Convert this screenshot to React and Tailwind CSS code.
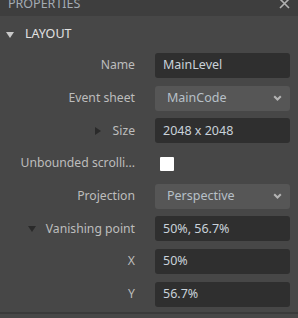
import React from 'react';

const font = { fontFamily: '"Segoe UI", "Noto Sans", "Open Sans", sans-serif' };

const Chevron = () => (
  <svg width="9" height="6" viewBox="0 0 9 6" className="shrink-0">
    <path d="M1.2 1.2 L4.5 4.5 L7.8 1.2" fill="none" stroke="#b4b4b4" strokeWidth="2" />
  </svg>
);

const TriRight = () => (
  <span className="mr-[12px] inline-block h-0 w-0 border-y-[4px] border-l-[6px] border-y-transparent border-l-[#2a2a2a]" />
);

const TriDown = () => (
  <span className="mr-[10px] inline-block h-0 w-0 border-x-[4px] border-t-[6px] border-x-transparent border-t-[#2a2a2a]" />
);

const Label = ({ children, icon }) => (
  <div className="flex w-[135px] shrink-0 items-center justify-end whitespace-nowrap text-[12.2px] text-[#bdbdbd]">
    {icon}
    {children}
  </div>
);

const Input = ({ value }) => (
  <div className="flex h-full w-[135px] items-center rounded-[3px] bg-[#2f2f2f] pl-[8px] text-[12.5px] text-[#c9d2da]">
    {value}
  </div>
);

const Select = ({ value }) => (
  <div className="flex h-full w-[135px] items-center justify-between rounded-[3px] bg-[#565656] pl-[12px] pr-[8px] text-[12.5px] text-[#b7c0c8]">
    <span>{value}</span>
    <Chevron />
  </div>
);

const Row = ({ label, icon, children }) => (
  <div className="flex h-[25px] items-center gap-[20px]">
    <Label icon={icon}>{label}</Label>
    {children}
  </div>
);

export default function App() {
  return (
    <div className="h-[318px] w-[298px] overflow-hidden bg-[#474747]" style={font}>
      <div className="flex h-[16px] items-start justify-between overflow-hidden bg-[#3e3e3e] pl-[8px] pr-[8px]">
        <span className="-mt-[4px] text-[12.5px] leading-[16px] text-[#a4acb4]">PROPERTIES</span>
        <svg width="11" height="11" viewBox="0 0 11 11" className="-mt-[2px]">
          <path d="M1 1 L10 10 M10 1 L1 10" stroke="#b0b0b0" strokeWidth="1.6" />
        </svg>
      </div>
      <div className="flex h-[37px] items-center pl-[6px]">
        <span className="mr-[11px] inline-block h-0 w-0 border-x-[4px] border-t-[6px] border-x-transparent border-t-[#c8c8c8]" />
        <span className="text-[12.5px] text-[#e2e2e2]">LAYOUT</span>
      </div>
      <div className="flex flex-col gap-[7.7px]">
        <Row label="Name">
          <Input value="MainLevel" />
        </Row>
        <Row label="Event sheet">
          <Select value="MainCode" />
        </Row>
        <Row label="Size" icon={<TriRight />}>
          <Input value="2048 x 2048" />
        </Row>
        <Row label="Unbounded scrolli...">
          <div className="ml-[5px] h-[14px] w-[14px] rounded-[1px] bg-white" />
        </Row>
        <Row label="Projection">
          <Select value="Perspective" />
        </Row>
        <Row label="Vanishing point" icon={<TriDown />}>
          <Input value="50%, 56.7%" />
        </Row>
        <Row label="X">
          <Input value="50%" />
        </Row>
        <Row label="Y">
          <Input value="56.7%" />
        </Row>
      </div>
      <div className="mt-[5px] h-[2px] bg-[#3a3a3a]" />
    </div>
  );
}
